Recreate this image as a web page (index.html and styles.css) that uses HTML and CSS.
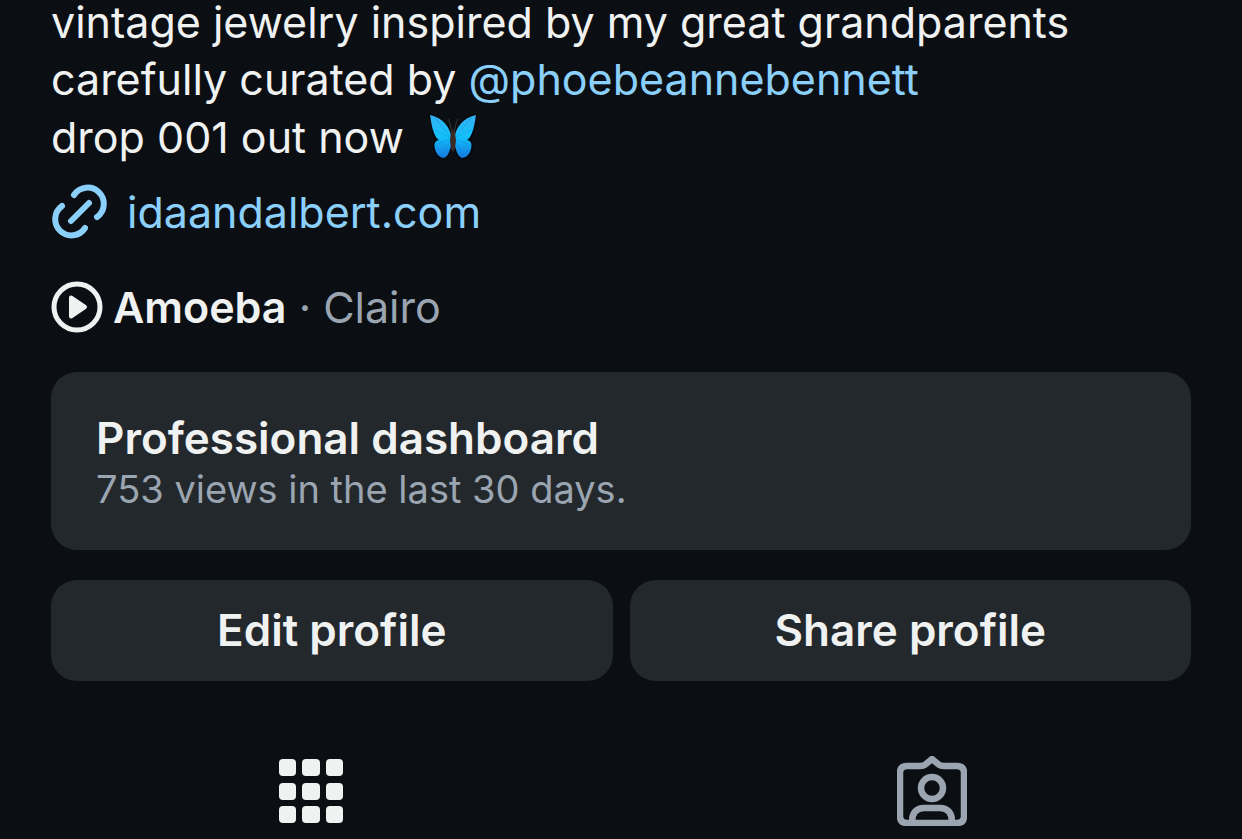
FILE: index.html
```
<!DOCTYPE html>
<html lang="en">
<head>
    <meta charset="UTF-8">
    <meta name="viewport" content="width=device-width, initial-scale=1.0">
    <title>idaandalbert</title>
    <link rel="stylesheet" href="styles.css">
</head>
<body>
    <main class="profile">
        <div class="bio">
            <div>vintage jewelry inspired by my great grandparents</div>
            <div>carefully curated by <a href="#">@phoebeannebennett</a></div>
            <div class="bio-drop">drop 001 out now
                <svg class="butterfly" viewBox="0 0 52 46" role="img" aria-label="butterfly">
                    <defs>
                        <linearGradient id="wing" x1="0" y1="0" x2="0" y2="1">
                            <stop offset="0" stop-color="#35b0f2"/>
                            <stop offset="0.5" stop-color="#13c2fa"/>
                            <stop offset="1" stop-color="#1478e0"/>
                        </linearGradient>
                    </defs>
                    <g id="half">
                        <path d="M25 25C22 11 14 2 2 0C0 1 1 4 3 6L5 19L8 25C5 30 6 38 10 43C15 47 20 45 23 40L26 28Z" fill="#05080c"/>
                        <path d="M25 25C23 14 17 4 3 1C4 7 5 14 7 19C9 23 10 25 12 26C7 27 7 31 8 35C9 40 13 44 17 44C22 42 23 35 25 29Z" fill="url(#wing)"/>
                        <path d="M24 24L8 4M24 24L8 16M24 25L10 30M24 26L15 43" stroke="#0b7ed0" stroke-opacity="0.3" fill="none"/>
                        <path d="M25 20C24 13 23 8 21 5" stroke="#3b3936" fill="none"/>
                    </g>
                    <use href="#half" transform="matrix(-1 0 0 1 52 0)"/>
                    <path d="M26 16C29 18 28 22 29 26L28 35L26 38L24 35L23 26C24 21 23 18 26 16Z" fill="#3c2a24"/>
                </svg>
            </div>
        </div>

        <a class="site-link" href="#">
            <svg class="link-icon" viewBox="0 0 56 54" aria-hidden="true">
                <path d="M23 10A16.2 16.2 0 1 1 46 32M11 21A16.2 16.2 0 1 0 34 43M20 36L38 18"/>
            </svg>
            idaandalbert.com
        </a>

        <div class="song">
            <svg class="play-icon" viewBox="0 0 52 52" aria-hidden="true">
                <circle cx="26" cy="26" r="23"/>
                <path d="M20 16.5L34 26L20 35.5Z"/>
            </svg>
            <span><b>Amoeba</b> · Clairo</span>
        </div>

        <section class="dashboard">
            <h2>Professional dashboard</h2>
            <p>753 views in the last 30 days.</p>
        </section>

        <div class="actions">
            <button class="button">Edit profile</button>
            <button class="button">Share profile</button>
        </div>
    </main>

    <nav class="tabs">
        <button class="tab active" aria-label="Posts">
            <svg class="grid-icon" viewBox="0 0 64 64">
                <rect x="0" y="0" width="17" height="17" rx="4"/>
                <rect x="23" y="0" width="18" height="17" rx="4"/>
                <rect x="47" y="0" width="17" height="17" rx="4"/>
                <rect x="0" y="24" width="17" height="17" rx="4"/>
                <rect x="23" y="24" width="18" height="17" rx="4"/>
                <rect x="47" y="24" width="17" height="17" rx="4"/>
                <rect x="0" y="47" width="17" height="17" rx="4"/>
                <rect x="23" y="47" width="18" height="17" rx="4"/>
                <rect x="47" y="47" width="17" height="17" rx="4"/>
            </svg>
        </button>
        <button class="tab" aria-label="Tagged">
            <svg class="tagged-icon" viewBox="0 0 70 70">
                <path d="M10 10H23C26 10 27 10 29 8L35 3L41 8C43 10 44 10 47 10H60Q67 10 67 17V60Q67 67 60 67H10Q3 67 3 60V17Q3 10 10 10Z"/>
                <circle cx="35" cy="32" r="11"/>
                <path d="M15 66C15 57 19 52 27 52H43C51 52 55 57 55 66"/>
            </svg>
        </button>
    </nav>
</body>
</html>
```

FILE: styles.css
```
* {
    box-sizing: border-box;
}
body {
    margin: 0;
    background-color: #0b0f14;
    color: #f0f2f2;
    font-family: Inter, 'Liberation Sans', sans-serif;
    font-size: 43px;
    line-height: 45px;
    overflow-x: hidden;
}
a {
    color: #8bd0fb;
    text-decoration: none;
}
.profile {
    padding: 0 51px;
}
.bio {
    display: flex;
    flex-direction: column;
    gap: 12px;
}
.bio-drop {
    display: flex;
    align-items: center;
    gap: 22px;
}
.butterfly {
    width: 54px;
    height: 46px;
}
.site-link {
    display: flex;
    align-items: center;
    gap: 20px;
    margin-top: 25px;
}
.link-icon {
    width: 56px;
    height: 54px;
    fill: none;
    stroke: #8bd0fb;
    stroke-width: 6;
    stroke-linecap: round;
    overflow: visible;
}
.song {
    display: flex;
    align-items: center;
    gap: 10px;
    margin-top: 42px;
    color: #9aa5b1;
}
.song b {
    font-weight: 600;
    color: #f0f2f2;
}
.play-icon {
    width: 52px;
    height: 52px;
    fill: #f0f2f2;
    stroke: #f0f2f2;
    stroke-linejoin: round;
    stroke-width: 4;
}
.play-icon circle {
    fill: none;
    stroke-width: 5;
}
.dashboard {
    margin-top: 39px;
    padding: 38px 45px;
    border-radius: 26px;
    background-color: #23282c;
}
.dashboard h2 {
    margin: 0;
    font-size: 44px;
    font-weight: 600;
    line-height: 57px;
}
.dashboard p {
    margin: 0;
    color: #9aa5b1;
    font-size: 38px;
}
.actions {
    display: grid;
    grid-template-columns: 1fr 1fr;
    gap: 17px;
    margin-top: 30px;
}
.button {
    height: 101px;
    padding: 0;
    border: none;
    border-radius: 26px;
    background-color: #23282c;
    color: #f0f2f2;
    font: inherit;
    font-size: 44px;
    font-weight: 600;
    cursor: pointer;
}
.tabs {
    display: flex;
    margin-top: 75px;
}
.tab {
    flex: 1;
    display: flex;
    justify-content: center;
    align-items: center;
    padding: 0;
    border: none;
    background: none;
    color: #9aa5b1;
    cursor: pointer;
}
.tab.active {
    color: #f0f2f2;
}
.grid-icon {
    width: 64px;
    height: 64px;
    fill: currentColor;
}
.tagged-icon {
    width: 70px;
    height: 70px;
    fill: none;
    stroke: currentColor;
    stroke-width: 6.5;
    stroke-linejoin: round;
}
```
